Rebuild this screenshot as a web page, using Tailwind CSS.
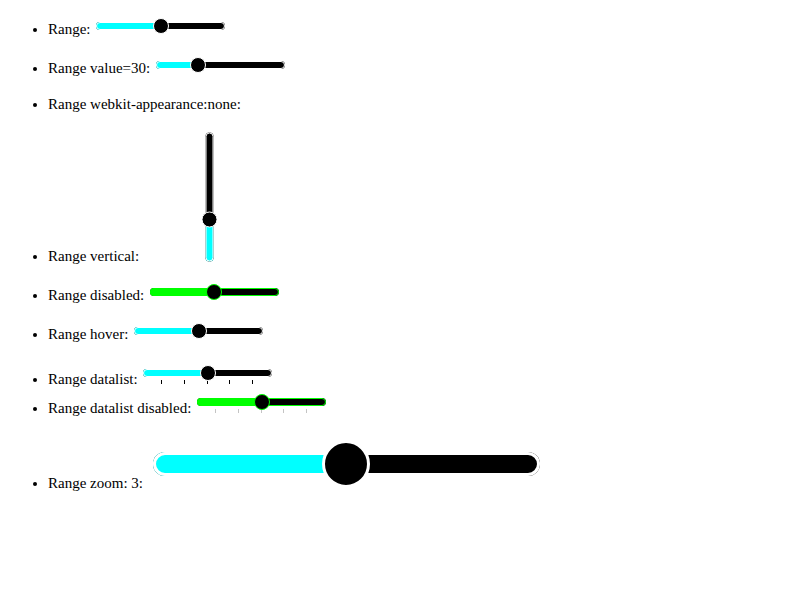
<!DOCTYPE html>
<html lang="en">
<head>
<meta charset="utf-8">
<meta name="viewport" content="width=device-width, initial-scale=1">
<title>Range inputs</title>
<script src="https://cdn.jsdelivr.net/npm/@tailwindcss/browser@4"></script>
</head>
<body class="bg-white text-black">
<svg class="absolute size-0" aria-hidden="true">
  <defs>
    <clipPath id="bar"><rect x="0" y="4" width="129" height="8" rx="4"/></clipPath>
    <g id="base"><rect x="0" y="4" width="129" height="8" rx="4" fill="#000"/></g>
    <g id="edge"><rect x=".5" y="4.5" width="128" height="7" rx="3.5" fill="none" stroke="currentColor"/></g>
    <path id="ticks" d="M18.5 15v4M41.5 15v4M64.5 15v4M86.5 15v4M109.5 15v4" stroke="currentColor" fill="none"/>
  </defs>
</svg>
<ul class="list-disc pt-4 pl-12 font-['Liberation_Serif',serif] text-[15px] leading-[18px]">
  <li>
    <label for="r1">Range:</label>
    <span class="relative mx-0.5 mt-0.5 inline-block h-4 w-[129px] align-baseline">
      <svg class="absolute inset-0 size-full overflow-visible text-white" viewBox="0 0 129 16" aria-hidden="true"><use href="#base"/><g clip-path="url(#bar)"><rect data-fill y="4" width="64.5" height="8" fill="#0ff"/></g><use href="#edge"/></svg>
      <input id="r1" type="range" value="50" class="absolute inset-0 size-full appearance-none bg-transparent [&::-webkit-slider-thumb]:size-4 [&::-webkit-slider-thumb]:appearance-none [&::-webkit-slider-thumb]:rounded-full [&::-webkit-slider-thumb]:border [&::-webkit-slider-thumb]:border-white [&::-webkit-slider-thumb]:bg-black">
    </span>
  </li>
  <li class="mt-[17px]">
    <label for="r2">Range value=30:</label>
    <span class="relative mx-0.5 mt-0.5 inline-block h-4 w-[129px] align-baseline">
      <svg class="absolute inset-0 size-full overflow-visible text-white" viewBox="0 0 129 16" aria-hidden="true"><use href="#base"/><g clip-path="url(#bar)"><rect data-fill y="4" width="41.9" height="8" fill="#0ff"/></g><use href="#edge"/></svg>
      <input id="r2" type="range" value="30" class="absolute inset-0 size-full appearance-none bg-transparent [&::-webkit-slider-thumb]:size-4 [&::-webkit-slider-thumb]:appearance-none [&::-webkit-slider-thumb]:rounded-full [&::-webkit-slider-thumb]:border [&::-webkit-slider-thumb]:border-white [&::-webkit-slider-thumb]:bg-black">
    </span>
  </li>
  <li class="mt-[18px]">
    <label for="r3">Range webkit-appearance:none:</label>
    <input id="r3" type="range" class="h-px w-[129px] appearance-none align-baseline opacity-0">
  </li>
  <li class="mt-[19px]">
    <label for="r4">Range vertical:</label>
    <span class="relative mx-0.5 inline-block h-[129px] w-[129px] align-baseline">
      <span class="absolute inset-0 my-auto block h-4 -rotate-90">
        <svg class="absolute inset-0 size-full overflow-visible text-white" viewBox="0 0 129 16" aria-hidden="true"><use href="#base"/><g clip-path="url(#bar)"><rect data-fill y="4" width="41.9" height="8" fill="#0ff"/></g><use href="#edge"/></svg>
        <input id="r4" type="range" value="30" class="absolute inset-0 size-full appearance-none bg-transparent [&::-webkit-slider-thumb]:size-4 [&::-webkit-slider-thumb]:appearance-none [&::-webkit-slider-thumb]:rounded-full [&::-webkit-slider-thumb]:border [&::-webkit-slider-thumb]:border-white [&::-webkit-slider-thumb]:bg-black">
      </span>
    </span>
  </li>
  <li class="mt-[17px]">
    <label for="r5">Range disabled:</label>
    <span class="relative mx-0.5 mt-0.5 inline-block h-4 w-[129px] align-baseline">
      <svg class="absolute inset-0 size-full overflow-visible text-[#0f0]" viewBox="0 0 129 16" aria-hidden="true"><use href="#base"/><g clip-path="url(#bar)"><rect data-fill y="4" width="64.5" height="8" fill="#0f0"/></g><use href="#edge"/></svg>
      <input id="r5" type="range" value="50" disabled class="absolute inset-0 size-full appearance-none bg-transparent [&::-webkit-slider-thumb]:size-4 [&::-webkit-slider-thumb]:appearance-none [&::-webkit-slider-thumb]:rounded-full [&::-webkit-slider-thumb]:border [&::-webkit-slider-thumb]:border-[#0f0] [&::-webkit-slider-thumb]:bg-black">
    </span>
  </li>
  <li class="mt-[17px]">
    <label for="r6">Range hover:</label>
    <span class="relative mx-0.5 mt-0.5 inline-block h-4 w-[129px] align-baseline">
      <svg class="absolute inset-0 size-full overflow-visible text-white" viewBox="0 0 129 16" aria-hidden="true"><use href="#base"/><g clip-path="url(#bar)"><rect data-fill y="4" width="64.5" height="8" fill="#0ff"/></g><use href="#edge"/></svg>
      <input id="r6" type="range" value="50" class="absolute inset-0 size-full appearance-none bg-transparent [&::-webkit-slider-thumb]:size-4 [&::-webkit-slider-thumb]:appearance-none [&::-webkit-slider-thumb]:rounded-full [&::-webkit-slider-thumb]:border [&::-webkit-slider-thumb]:border-white [&::-webkit-slider-thumb]:bg-black">
    </span>
  </li>
  <li class="mt-5">
    <label for="r7">Range datalist:</label>
    <span class="relative mx-0.5 mt-0.5 inline-block h-[19px] w-[129px] align-baseline">
      <svg class="absolute inset-x-0 top-0 h-4 w-full overflow-visible text-white" viewBox="0 0 129 16" aria-hidden="true"><use href="#ticks" class="text-black"/><use href="#base"/><g clip-path="url(#bar)"><rect data-fill y="4" width="64.5" height="8" fill="#0ff"/></g><use href="#edge"/></svg>
      <input id="r7" type="range" value="50" class="absolute inset-x-0 top-0 h-4 w-full appearance-none bg-transparent [&::-webkit-slider-thumb]:size-4 [&::-webkit-slider-thumb]:appearance-none [&::-webkit-slider-thumb]:rounded-full [&::-webkit-slider-thumb]:border [&::-webkit-slider-thumb]:border-white [&::-webkit-slider-thumb]:bg-black">
    </span>
  </li>
  <li class="mt-1">
    <label for="r8">Range datalist disabled:</label>
    <span class="relative mx-0.5 mt-0.5 inline-block h-[19px] w-[129px] align-baseline">
      <svg class="absolute inset-x-0 top-0 h-4 w-full overflow-visible text-[#0f0]" viewBox="0 0 129 16" aria-hidden="true"><use href="#ticks" class="text-[#c4c4c4]"/><use href="#base"/><g clip-path="url(#bar)"><rect data-fill y="4" width="64.5" height="8" fill="#0f0"/></g><use href="#edge"/></svg>
      <input id="r8" type="range" value="50" disabled class="absolute inset-x-0 top-0 h-4 w-full appearance-none bg-transparent [&::-webkit-slider-thumb]:size-4 [&::-webkit-slider-thumb]:appearance-none [&::-webkit-slider-thumb]:rounded-full [&::-webkit-slider-thumb]:border [&::-webkit-slider-thumb]:border-[#0f0] [&::-webkit-slider-thumb]:bg-black">
    </span>
  </li>
  <li class="mt-[17px]">
    <label for="r9">Range zoom: 3:</label>
    <span class="relative mx-1.5 mt-1.5 inline-block h-12 w-[387px] align-baseline">
      <svg class="absolute inset-0 size-full overflow-visible text-white" viewBox="0 0 129 16" aria-hidden="true"><use href="#base"/><g clip-path="url(#bar)"><rect data-fill y="4" width="64.5" height="8" fill="#0ff"/></g><use href="#edge"/></svg>
      <input id="r9" type="range" value="50" class="absolute inset-0 size-full appearance-none bg-transparent [&::-webkit-slider-thumb]:size-12 [&::-webkit-slider-thumb]:appearance-none [&::-webkit-slider-thumb]:rounded-full [&::-webkit-slider-thumb]:border-3 [&::-webkit-slider-thumb]:border-white [&::-webkit-slider-thumb]:bg-black">
    </span>
  </li>
</ul>
<script>
  // Keep the filled part of each track level with its thumb.
  document.querySelectorAll('input[type=range]').forEach(function (input) {
    var fill = input.parentElement.querySelector(':scope > svg [data-fill]');
    if (!fill) return;
    input.addEventListener('input', function () {
      fill.setAttribute('width', 8 + 113 * input.value / 100);
    });
  });
</script>
</body>
</html>
